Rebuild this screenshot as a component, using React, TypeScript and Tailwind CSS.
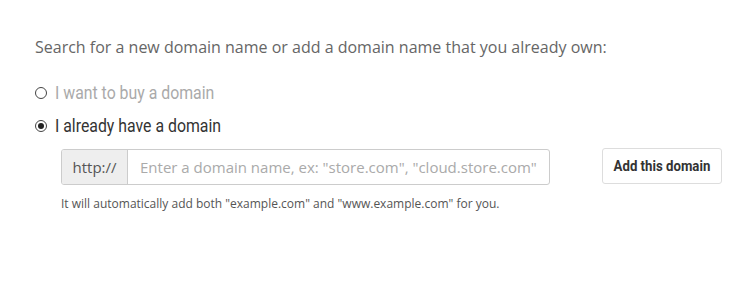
import React, { useState } from 'react';

const App: React.FC = () => {
  const [mode, setMode] = useState<'buy' | 'own'>('own');

  return (
    <div className="w-[754px] h-[284px] bg-white font-['Open_Sans',sans-serif]">
      <div className="pl-[35px] pt-[36px]">
        <p className="text-[16px] leading-[22px] text-[#666]">
          Search for a new domain name or add a domain name that you already own:
        </p>

        <div className="mt-[24px] flex flex-col gap-[11px] font-['Roboto',sans-serif] text-[18px] leading-[22px]">
          <label className="flex items-center gap-[8px] cursor-pointer" onClick={() => setMode('buy')}>
            <span className="w-[12px] h-[12px] rounded-full border border-[#444] bg-white flex items-center justify-center">
              {mode === 'buy' && <span className="w-[6px] h-[6px] rounded-full bg-[#222]" />}
            </span>
            <span className={`inline-block origin-left scale-x-[0.88] whitespace-nowrap ${mode === 'buy' ? 'text-[#333]' : 'text-[#aaa]'}`}>
              I want to buy a domain
            </span>
          </label>
          <label className="flex items-center gap-[8px] cursor-pointer" onClick={() => setMode('own')}>
            <span className="w-[12px] h-[12px] rounded-full border border-[#444] bg-white flex items-center justify-center">
              {mode === 'own' && <span className="w-[6px] h-[6px] rounded-full bg-[#222]" />}
            </span>
            <span className={`inline-block origin-left scale-x-[0.88] whitespace-nowrap ${mode === 'own' ? 'text-[#333]' : 'text-[#aaa]'}`}>
              I already have a domain
            </span>
          </label>
        </div>

        <div className="mt-[12px] ml-[26px] flex items-start">
          <div className="flex w-[489px] h-[36px] border border-[#ccc] rounded-[3px] overflow-hidden">
            <div className="w-[66px] flex items-center justify-center bg-[#eee] border-r border-[#ccc] text-[15px] text-[#555]">
              http://
            </div>
            <input
              className="flex-1 px-[12px] text-[15px] text-[#555] placeholder:text-[#aaa] outline-none"
              placeholder={'Enter a domain name, ex: "store.com", "cloud.store.com"'}
            />
          </div>
          <button className="ml-[52px] -mt-[1px] w-[120px] h-[36px] border border-[#ddd] rounded-[3px] bg-white flex items-center justify-center font-['Roboto',sans-serif] font-bold text-[15px] text-[#333]">
            <span className="inline-block scale-x-[0.88] whitespace-nowrap">Add this domain</span>
          </button>
        </div>

        <p className="ml-[26px] mt-[10px] text-[12px] text-[#555]">
          It will automatically add both "example.com" and "www.example.com" for you.
        </p>
      </div>
    </div>
  );
};

export default App;
